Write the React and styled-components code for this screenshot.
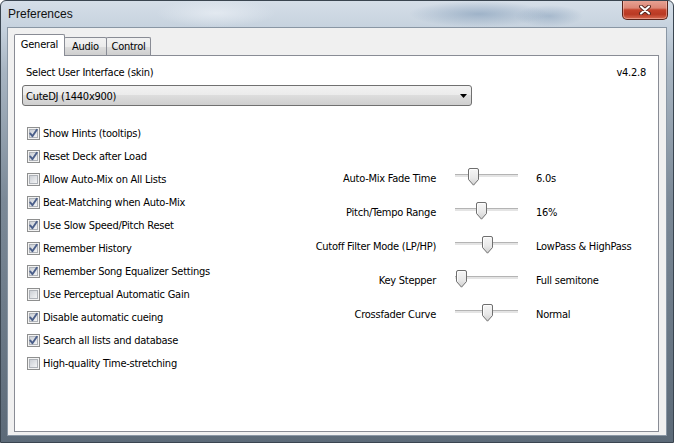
import React from "react";
import styled, { createGlobalStyle } from "styled-components";

const GlobalStyle = createGlobalStyle`
  html, body {
    margin: 0;
    padding: 0;
    background: #fff;
  }
  body {
    font-family: "DejaVu Sans Condensed", "Liberation Sans", sans-serif;
    font-size: 11px;
    color: #000;
  }
`;

const checkboxes = [
  { label: "Show Hints (tooltips)", checked: true },
  { label: "Reset Deck after Load", checked: true },
  { label: "Allow Auto-Mix on All Lists", checked: false },
  { label: "Beat-Matching when Auto-Mix", checked: true },
  { label: "Use Slow Speed/Pitch Reset", checked: true },
  { label: "Remember History", checked: true },
  { label: "Remember Song Equalizer Settings", checked: true },
  { label: "Use Perceptual Automatic Gain", checked: false },
  { label: "Disable automatic cueing", checked: true },
  { label: "Search all lists and database", checked: true },
  { label: "High-quality Time-stretching", checked: false },
];

const sliders = [
  { label: "Auto-Mix Fade Time", pos: 13, value: "6.0s" },
  { label: "Pitch/Tempo Range", pos: 21, value: "16%" },
  { label: "Cutoff Filter Mode (LP/HP)", pos: 27, value: "LowPass & HighPass" },
  { label: "Key Stepper", pos: 1, value: "Full semitone" },
  { label: "Crossfader Curve", pos: 27, value: "Normal" },
];

const tabs = [
  { label: "General", width: 51, active: true },
  { label: "Audio", width: 43 },
  { label: "Control", width: 45 },
];

function CheckBox({ checked }) {
  return (
    <svg width="13" height="13" viewBox="0 0 13 13">
      <defs>
        <linearGradient id="cbfill" x1="0" y1="0" x2="1" y2="1">
          <stop offset="0" stopColor="#c9cdd3" />
          <stop offset="1" stopColor="#f5f6f7" />
        </linearGradient>
      </defs>
      <rect x="0.5" y="0.5" width="12" height="12" fill="#f3f3f3" stroke="#8e8f8f" />
      <rect x="2.5" y="2.5" width="8" height="8" fill="url(#cbfill)" stroke="#aeb2b8" />
      {checked && (
        <path
          d="M3.2 6.4 L5.4 9.2 L9.8 2.8"
          fill="none"
          stroke="#4b5f8a"
          strokeWidth="1.9"
          strokeLinecap="round"
          strokeLinejoin="round"
        />
      )}
    </svg>
  );
}

function ThumbIcon() {
  return (
    <svg width="11" height="18" viewBox="0 0 11 18">
      <defs>
        <linearGradient id="thumbfill" x1="0" y1="0" x2="0" y2="1">
          <stop offset="0" stopColor="#f7f7f7" />
          <stop offset="0.55" stopColor="#e9e9e9" />
          <stop offset="1" stopColor="#d0d0d0" />
        </linearGradient>
      </defs>
      <path
        d="M0.5 2 Q0.5 0.5 2 0.5 H9 Q10.5 0.5 10.5 2 V11.5 L5.5 17.2 L0.5 11.5 Z"
        fill="url(#thumbfill)"
        stroke="#6f6f6f"
      />
      <path d="M1.5 2 V11 M2 1.5 H9" stroke="#ffffff" strokeOpacity="0.8" />
    </svg>
  );
}

function CloseGlyph() {
  return (
    <svg width="12" height="10" viewBox="0 0 12 10">
      <path d="M2 1.5 L10 8.5 M10 1.5 L2 8.5" stroke="#5a2a22" strokeWidth="4" strokeLinecap="round" />
      <path d="M2 1.5 L10 8.5 M10 1.5 L2 8.5" stroke="#ffffff" strokeWidth="2" strokeLinecap="round" />
    </svg>
  );
}

export default function App() {
  return (
    <>
      <GlobalStyle />
      <Window>
        <TitleBar>
          <Title>Preferences</Title>
          <CloseButton>
            <CloseGlyph />
          </CloseButton>
        </TitleBar>
        <Client>
          <TabStrip>
            {tabs.map((t) => (
              <Tab key={t.label} $active={t.active} $w={t.width}>
                {t.label}
              </Tab>
            ))}
          </TabStrip>
          <Panel>
            <PanelHeader>
              <span>Select User Interface (skin)</span>
              <span>v4.2.8</span>
            </PanelHeader>
            <Select>
              <span>CuteDJ (1440x900)</span>
              <svg width="7" height="4" viewBox="0 0 7 4">
                <path d="M0 0 H7 L3.5 4 Z" fill="#000" />
              </svg>
            </Select>
            <Body>
              <CheckList>
                {checkboxes.map((c) => (
                  <CheckRow key={c.label}>
                    <CheckBox checked={c.checked} />
                    <span>{c.label}</span>
                  </CheckRow>
                ))}
              </CheckList>
              <SliderGrid>
                {sliders.map((s) => (
                  <React.Fragment key={s.label}>
                    <SliderLabel>{s.label}</SliderLabel>
                    <Track>
                      <TrackLine />
                      <Thumb $pos={s.pos}>
                        <ThumbIcon />
                      </Thumb>
                    </Track>
                    <SliderValue>{s.value}</SliderValue>
                  </React.Fragment>
                ))}
              </SliderGrid>
            </Body>
          </Panel>
        </Client>
      </Window>
    </>
  );
}

const Window = styled.div`
  width: 674px;
  height: 443px;
  box-sizing: border-box;
  display: flex;
  flex-direction: column;
  border: 1px solid #3a4550;
  border-radius: 6px 6px 0 0;
  overflow: hidden;
  background:
    radial-gradient(70px 13px at 478px 13px, rgba(120, 148, 178, 0.55), transparent),
    radial-gradient(34px 11px at 548px 15px, rgba(120, 148, 178, 0.45), transparent),
    radial-gradient(60px 14px at 215px 12px, rgba(235, 240, 246, 0.7), transparent),
    linear-gradient(180deg, #d5dee8 0px, #c6d2de 27px, #a8b5c2 70px, #7b8997 200px, #5c6a78 100%);
`;

const TitleBar = styled.div`
  height: 27px;
  display: flex;
  justify-content: space-between;
  align-items: flex-start;
`;

const Title = styled.div`
  font-family: "Liberation Sans", Arial, sans-serif;
  font-size: 12px;
  line-height: 27px;
  padding-left: 7px;
  color: #111;
`;

const CloseButton = styled.div`
  width: 46px;
  height: 20px;
  margin: -1px 5px 0 0;
  box-sizing: border-box;
  border: 1px solid #5a241b;
  border-top: none;
  border-radius: 0 0 5px 5px;
  background: linear-gradient(
    180deg,
    #e8a597 0%,
    #dc8675 42%,
    #c4432c 52%,
    #b93923 75%,
    #d66a52 100%
  );
  box-shadow: inset 0 0 0 1px rgba(255, 210, 200, 0.45);
  display: flex;
  align-items: center;
  justify-content: center;
`;

const Client = styled.div`
  flex: 1;
  margin: 0 7px 7px 7px;
  padding: 6px 7px 3px 6px;
  background: #f0f0f0;
  box-shadow: 0 0 0 1px #8996a4;
  display: flex;
  flex-direction: column;
`;

const TabStrip = styled.div`
  height: 21px;
  display: flex;
  align-items: flex-end;
`;

const Tab = styled.div`
  position: relative;
  box-sizing: border-box;
  width: ${(p) => p.$w}px;
  height: ${(p) => (p.$active ? 22 : 18)}px;
  margin-bottom: ${(p) => (p.$active ? -1 : 0)}px;
  margin-left: ${(p) => (p.$active ? 0 : -1)}px;
  z-index: ${(p) => (p.$active ? 2 : 1)};
  border: 1px solid #898c95;
  border-bottom: none;
  border-radius: 2px 2px 0 0;
  background: ${(p) =>
    p.$active
      ? "#ffffff"
      : "linear-gradient(180deg, #f2f2f2 0%, #ebebeb 50%, #dddddd 51%, #cfcfcf 100%)"};
  display: flex;
  align-items: center;
  justify-content: center;
  padding-bottom: ${(p) => (p.$active ? 2 : 0)}px;
  letter-spacing: -0.25px;
`;

const Panel = styled.div`
  flex: 1;
  background: #fff;
  border: 1px solid #898c95;
  padding: 10px 12px 0 7px;
  display: flex;
  flex-direction: column;
  letter-spacing: -0.25px;
`;

const PanelHeader = styled.div`
  display: flex;
  justify-content: space-between;
  line-height: 14px;
  padding-left: 4px;
`;

const Select = styled.div`
  width: 450px;
  height: 21px;
  margin-top: 5px;
  box-sizing: border-box;
  border: 1px solid #707070;
  border-radius: 3px;
  background: linear-gradient(180deg, #f2f2f2 0%, #ebebeb 49%, #dddddd 50%, #cfcfcf 100%);
  display: flex;
  align-items: center;
  justify-content: space-between;
  padding: 1px 4px 0 3px;
`;

const Body = styled.div`
  display: flex;
  margin-top: 16px;
`;

const CheckList = styled.div`
  width: 280px;
  box-sizing: border-box;
  padding-left: 5px;
  display: flex;
  flex-direction: column;
`;

const CheckRow = styled.div`
  height: 23px;
  display: flex;
  align-items: center;
  gap: 3px;

  svg {
    flex: none;
  }
`;

const SliderGrid = styled.div`
  display: grid;
  grid-template-columns: 153px 63px auto;
  grid-auto-rows: 34px;
  align-items: center;
  padding-top: 39px;
`;

const SliderLabel = styled.div`
  text-align: right;
  padding-right: 19px;
`;

const SliderValue = styled.div`
  padding-left: 18px;
`;

const Track = styled.div`
  position: relative;
  align-self: stretch;
`;

const TrackLine = styled.div`
  position: absolute;
  left: 0;
  right: 0;
  top: 13px;
  height: 3px;
  box-sizing: border-box;
  border-top: 1px solid #b4b4b4;
  background: #e4e4e4;
`;

const Thumb = styled.div`
  position: absolute;
  top: 7px;
  left: ${(p) => p.$pos}px;
  width: 11px;
  height: 18px;
  line-height: 0;
`;
